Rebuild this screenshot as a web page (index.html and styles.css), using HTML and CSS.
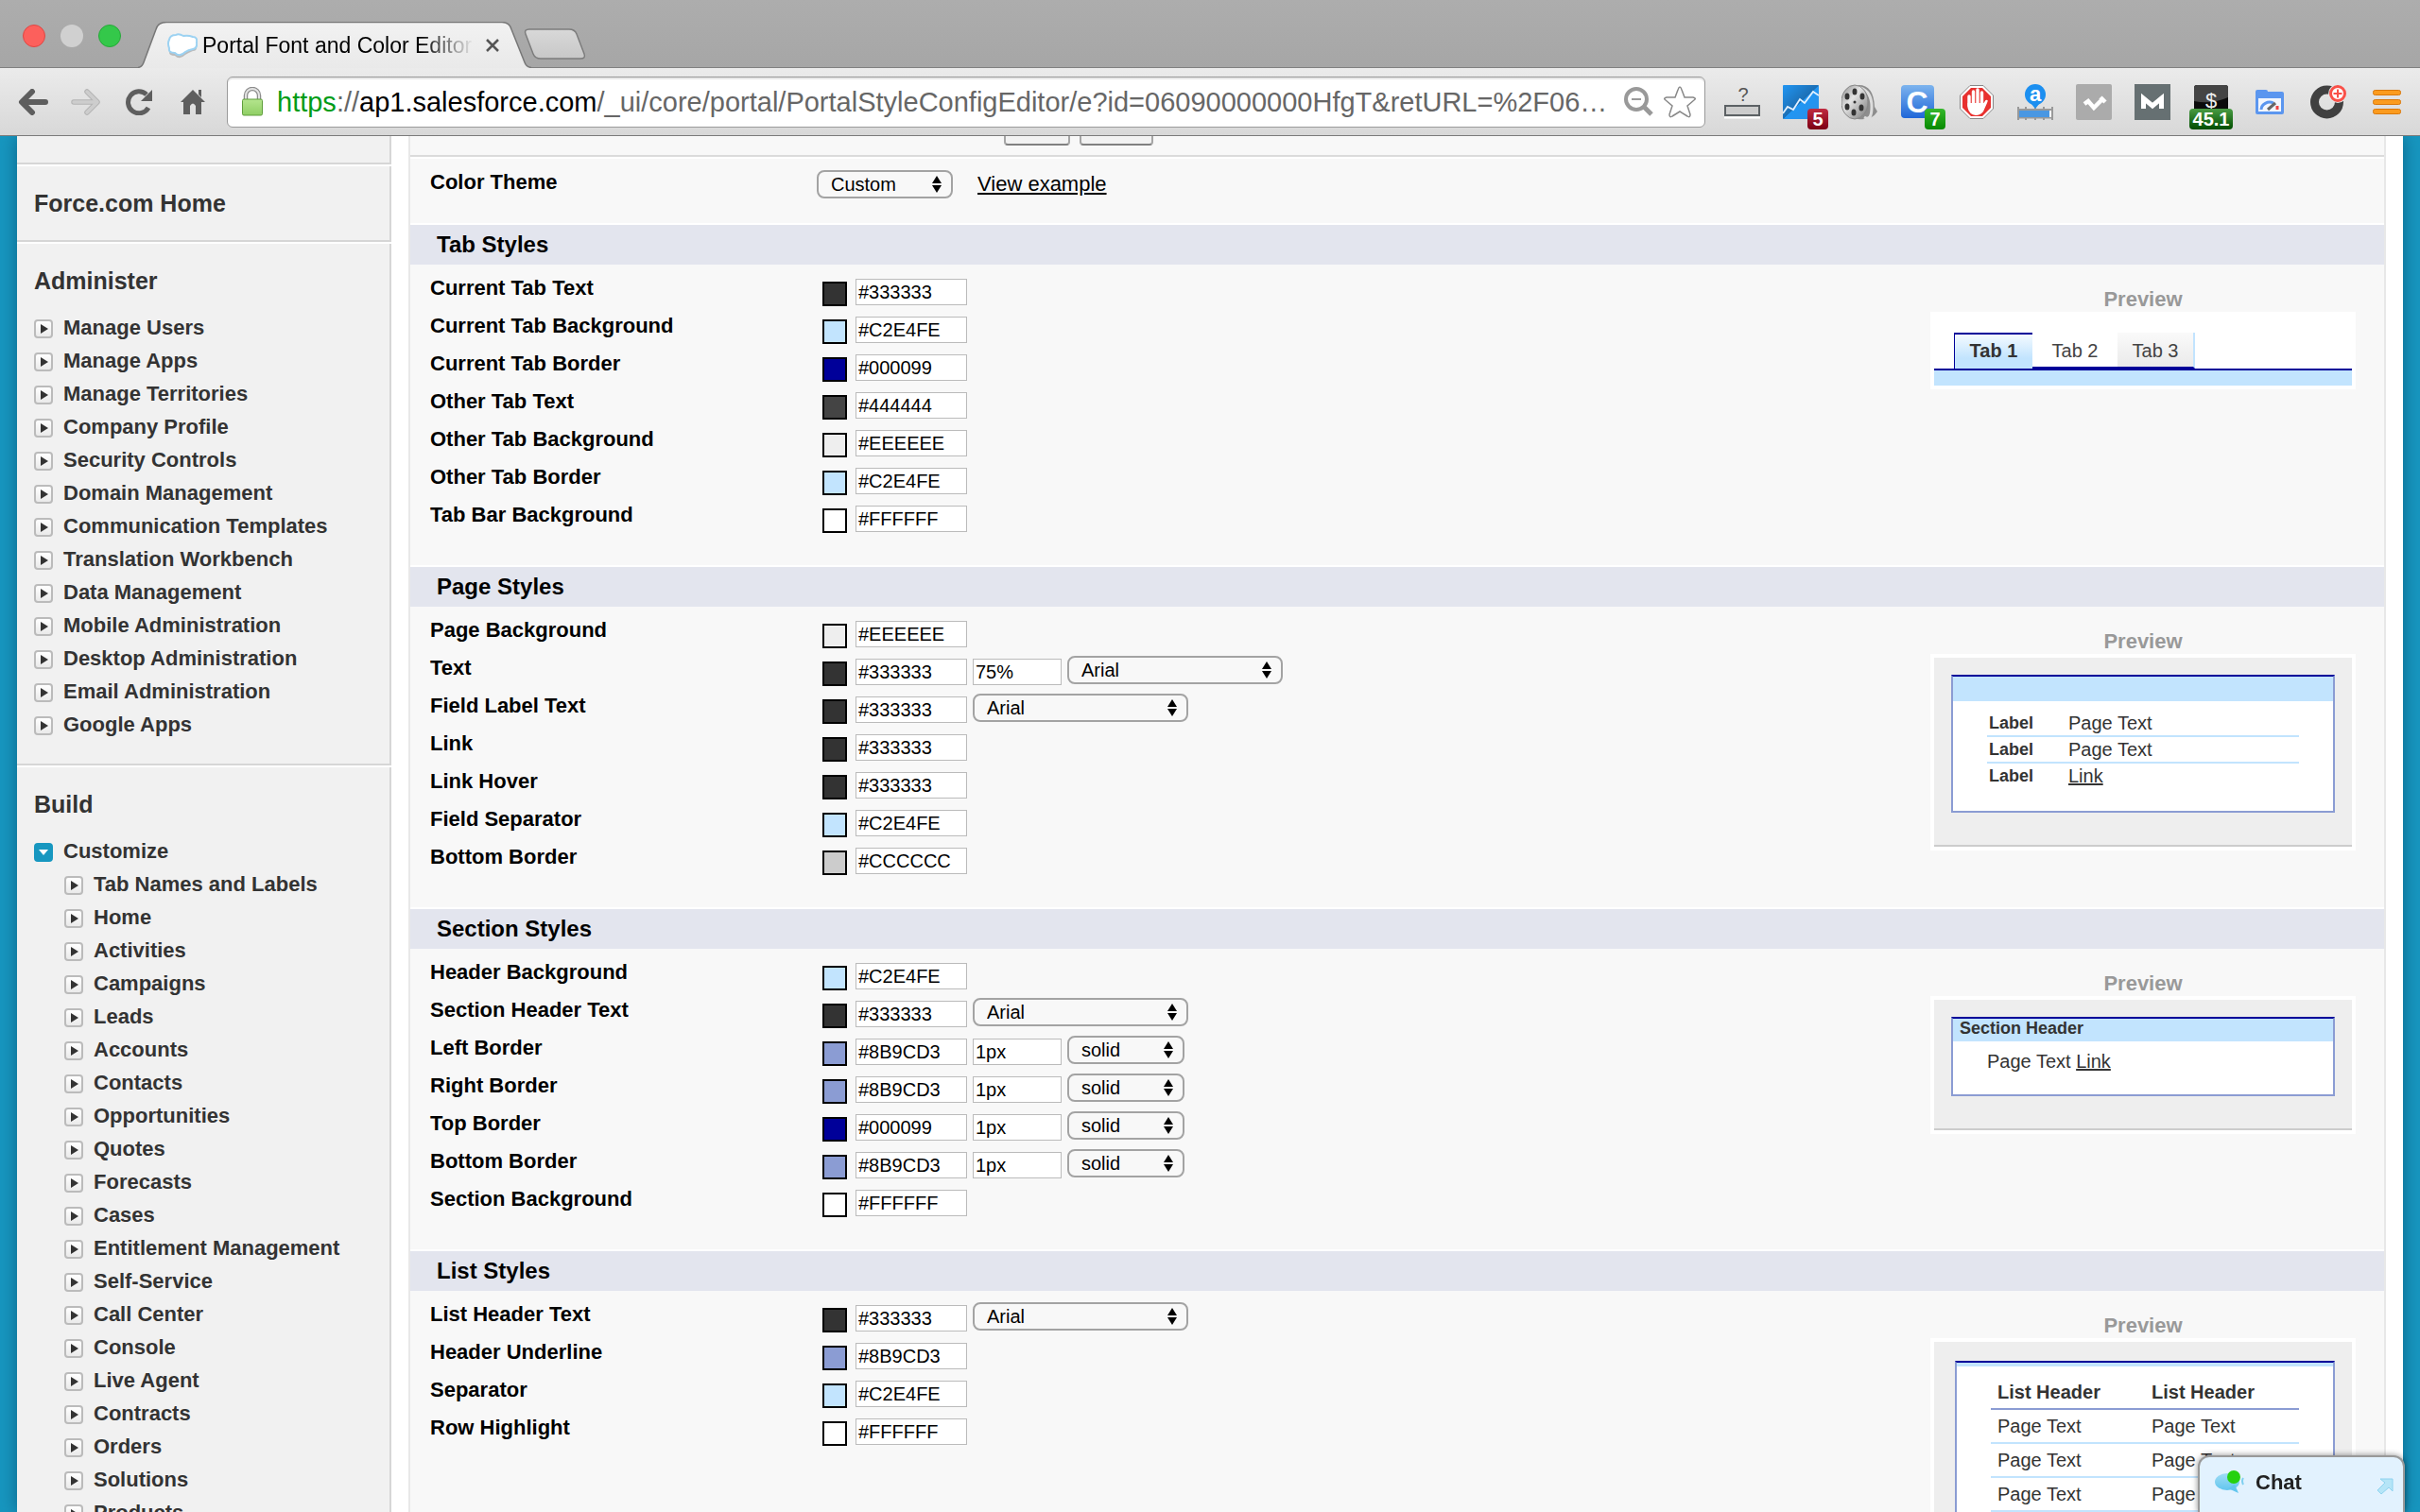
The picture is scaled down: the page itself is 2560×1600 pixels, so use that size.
FILE: index.html
```html
<!DOCTYPE html>
<html lang="en">
<head>
<meta charset="utf-8">
<title>Portal Font and Color Editor</title>
<link rel="stylesheet" href="styles.css">
</head>
<body>
<svg class="defs" aria-hidden="true">
  <symbol id="tri" viewBox="0 0 16 16"><path d="M5 3l8 5-8 5z" fill="#333"/></symbol>
  <linearGradient id="tabfill" x1="0" y1="0" x2="0" y2="1"><stop offset="0" stop-color="#f2f2f2"/><stop offset="1" stop-color="#e9e9e9"/></linearGradient>
  <linearGradient id="newfill" x1="0" y1="0" x2="0" y2="1"><stop offset="0" stop-color="#d8d8d8"/><stop offset="1" stop-color="#c8c8c8"/></linearGradient>
  <linearGradient id="lockfill" x1="0" y1="0" x2="0" y2="1"><stop offset="0" stop-color="#b5e58e"/><stop offset="1" stop-color="#8fce64"/></linearGradient>
  <linearGradient id="bluefill" x1="0" y1="0" x2="1" y2="1"><stop offset="0" stop-color="#2196f3"/><stop offset=".5" stop-color="#1c6fb5"/><stop offset=".51" stop-color="#2196f3"/><stop offset="1" stop-color="#2d8fe6"/></linearGradient>
  <linearGradient id="cfill" x1="0" y1="0" x2="0" y2="1"><stop offset="0" stop-color="#7db4ee"/><stop offset="1" stop-color="#1f66d8"/></linearGradient>
  <linearGradient id="reelfill" x1="0" y1="0" x2="1" y2="1"><stop offset="0" stop-color="#8a8a8a"/><stop offset=".4" stop-color="#e4e4e4"/><stop offset="1" stop-color="#777"/></linearGradient>
  <linearGradient id="bubble" x1="0" y1="0" x2="0" y2="1"><stop offset="0" stop-color="#9fdcf5"/><stop offset="1" stop-color="#62c6ee"/></linearGradient>
</svg>

<header class="browser">
  <div class="tabstrip">
    <div class="lights"><span class="light red"></span><span class="light grey"></span><span class="light green"></span></div>
    <div class="tab">
      <svg class="tab-shape" viewBox="0 0 416 49" preserveAspectRatio="none"><path d="M0 48.500C4 48 5 46 6 43L19 8Q21 .5 30 .5H385Q393 .5 395 8L409 43C410 46 412 48 416 48.500V50H0z" fill="url(#tabfill)"/><path d="M0 48.500C4 48 5 46 6 43L19 8Q21 .5 30 .5H385Q393 .5 395 8L409 43C410 46 412 48 416 48.500" fill="none" stroke="#777" stroke-width="1.500"/></svg>
      <svg class="favicon" viewBox="0 0 32 28"><path d="M2 8Q3 3 9 4Q12 1 17 4Q22 4 27 5Q32 5 31 12Q32 18 27 18Q22 20 19 22Q13 28 8 23Q1 23 2 17Q0 12 2 8z" fill="#9a9a9a" opacity=".6" transform="translate(0 2)"/><path d="M2 8Q3 3 9 3Q12 1 17 4Q22 3 27 5Q32 5 31 11Q32 17 27 18Q22 19 19 21Q13 27 8 22Q1 22 2 17Q0 12 2 8z" fill="#fff" stroke="#9cd2f2" stroke-width="2"/></svg>
      <span class="tab-title">Portal Font and Color Editor</span>
      <button class="tab-close" aria-label="Close tab"><svg viewBox="0 0 16 16"><path d="M2 2L14 14M14 2L2 14" stroke="#555" stroke-width="2.500"/></svg></button>
    </div>
    <button class="newtab" aria-label="New tab"><svg viewBox="0 0 66 34"><path d="M2 6Q0 1 6 1H48Q54 1 56 6L64 27Q66 32 60 32H18Q12 32 10 27z" fill="url(#newfill)" stroke="#7c7c7c" stroke-width="1.500"/></svg></button>
  </div>
  <div class="toolbar">
    <nav class="nav-buttons" aria-label="Browser">
      <button aria-label="Back"><svg viewBox="0 0 32 28"><path d="M15 3L4 14L15 25M5 14H29" fill="none" stroke="#5e5e5e" stroke-width="6" stroke-linecap="round" stroke-linejoin="round"/></svg></button>
      <button aria-label="Forward"><svg viewBox="0 0 32 28"><path d="M17 3L28 14L17 25M27 14H3" fill="none" stroke="#b4b4b4" stroke-width="5.500" stroke-linecap="round" stroke-linejoin="round"/><path d="M17 3L28 14L17 25M27 14H3" fill="none" stroke="#cdcdcd" stroke-width="3.500" stroke-linecap="round" stroke-linejoin="round"/></svg></button>
      <button aria-label="Reload"><svg viewBox="0 0 32 28"><path d="M26 20A11.500 11.500 0 1 1 24 6" fill="none" stroke="#5e5e5e" stroke-width="5"/><path d="M30 1V13H18z" fill="#5e5e5e"/></svg></button>
      <button aria-label="Home"><svg viewBox="0 0 32 28"><path d="M17 1L30 14H26V27H20V18Q17 13 14 18V27H7V14H4zM23 1H26V9L23 6z" fill="#5e5e5e"/></svg></button>
    </nav>
    <div class="omnibox">
      <svg class="lock" viewBox="0 0 24 32"><path d="M5 14V9a7 7 0 0 1 14 0V14" fill="none" stroke="#8c8c8c" stroke-width="4.500"/><path d="M5 14V9a7 7 0 0 1 14 0V14" fill="none" stroke="#e4e4e4" stroke-width="2"/><rect x="1.500" y="13" width="21" height="17" rx="1.500" fill="url(#lockfill)" stroke="#5f9e3c"/></svg>
      <div class="url" role="textbox" aria-label="Address"><span class="scheme">https</span>://<span class="host">ap1.salesforce.com</span>/_ui/core/portal/PortalStyleConfigEditor/e?id=06090000000HfgT&amp;retURL=%2F06…</div>
      <button class="omni-btn" aria-label="Zoom"><svg viewBox="0 0 32 34"><circle cx="14" cy="14" r="11" fill="none" stroke="#999" stroke-width="4"/><path d="M9 14H19" stroke="#999" stroke-width="2"/><path d="M22 22L30 30" stroke="#999" stroke-width="5"/></svg></button>
      <button class="omni-btn star" aria-label="Bookmark"><svg viewBox="0 0 36 36"><path d="M18 2Q19 2 20 5L23 13H32Q36 14 33 16L26 22L29 31Q29 35 26 33L18 28L10 33Q7 35 7 31L10 22L3 16Q0 14 4 13H13L16 5Q17 2 18 2z" fill="#fff" stroke="#888" stroke-width="1.500"/></svg></button>
    </div>
    <div class="extensions">
      <button aria-label="Box"><svg viewBox="0 0 38 38"><text x="20" y="18" font-size="20" text-anchor="middle" fill="#555">?</text><rect x="1" y="23" width="36" height="10" fill="#ccc" stroke="#5c6164" stroke-width="2"/><path d="M0 35.500H38" stroke="#fff" stroke-width="2"/></svg></button>
      <button aria-label="Stats"><svg viewBox="0 0 38 38"><rect y="1" width="38" height="36" rx="1" fill="url(#bluefill)"/><path d="M0 31L5 24L11 27L18 16L23 20L32 8L38 12" fill="none" stroke="#e3f1ff" stroke-width="1.800"/></svg><span class="badge crimson">5</span></button>
      <button aria-label="Film"><svg viewBox="0 0 38 38"><path d="M17 1Q34 0 35 24L38 29Q32 39 17 37z" fill="#8d8d8d"/><path d="M20 4Q32 8 32 24T24 35" fill="none" stroke="#ddd" stroke-width="3"/><ellipse cx="14" cy="19" rx="14" ry="18" fill="url(#reelfill)" stroke="#888"/><g fill="#333"><ellipse cx="14" cy="8" rx="2.500" ry="3.500"/><ellipse cx="22" cy="13" rx="2.500" ry="3.500"/><ellipse cx="21" cy="25" rx="2.500" ry="3.500"/><ellipse cx="13" cy="30" rx="2.500" ry="3.500"/><ellipse cx="6" cy="24" rx="2.500" ry="3.500"/><ellipse cx="6" cy="13" rx="2.500" ry="3.500"/><circle cx="14" cy="19" r="1.500"/></g></svg></button>
      <button aria-label="Clip"><svg viewBox="0 0 38 38"><rect x="1" y="1" width="35" height="35" rx="4" fill="url(#cfill)"/><text x="18" y="30" font-size="32" font-weight="700" text-anchor="middle" fill="#fff">C</text></svg><span class="badge lime">7</span></button>
      <button aria-label="Block"><svg viewBox="0 0 38 38"><path d="M12 1.500H26L36.500 12V26L26 36.500H12L1.500 26V12z" fill="#fff" stroke="#888"/><path d="M13 4H25L34 13V25L25 34H13L4 25V13z" fill="#e8312f"/><path d="M11 13V23M15.500 8V20M20 6V20M24.500 9V21" stroke="#fff" stroke-width="3.400" stroke-linecap="round"/><path d="M9.500 20H26.500L28.500 17Q32 16 30 20L26 29Q23 33 18 33Q11 32 9.500 25z" fill="#fff"/></svg></button>
      <button aria-label="Measure"><svg viewBox="0 0 38 38"><path d="M0 27H38M0 35.500H38M1 24V38M37 24V38M9 24V28M19 24V28M28 24V28M9 34V38M19 34V38M28 34V38" stroke="#999" stroke-width="2"/><rect x="2" y="28" width="32" height="7" fill="#4a97e2"/><rect x="34" y="28" width="2" height="7" fill="#fff"/><path d="M19 26L14 20H24z" fill="#1c8ff0"/><circle cx="19" cy="11" r="11" fill="#1c8ff0"/><text x="19" y="18" font-size="22" font-weight="700" text-anchor="middle" fill="#fff">a</text></svg></button>
      <button aria-label="Monitor"><svg viewBox="0 0 38 38"><rect width="38" height="38" rx="2" fill="#ababab"/><path d="M9 21L13 18L19 25L28 16M26 14L31 19" fill="none" stroke="#fff" stroke-width="4.500"/></svg></button>
      <button aria-label="Mail"><svg viewBox="0 0 38 38"><rect width="38" height="38" fill="#667072"/><path d="M9.500 26V15L19 23L28.500 15V26" fill="none" stroke="#fff" stroke-width="5"/></svg></button>
      <button aria-label="Price"><svg viewBox="0 0 38 38"><rect x="1" y="1" width="36" height="36" rx="3" fill="#0b0b0b"/><path d="M1 18V4Q1 1 4 1H34Q37 1 37 4V14Q19 22 1 18z" fill="#444"/><text x="19" y="25" font-size="22" text-anchor="middle" fill="#eee">$</text></svg><span class="badge forest wide">45.1</span></button>
      <button aria-label="Speed"><svg viewBox="0 0 38 38"><rect x="4" y="6" width="13" height="8" rx="2" fill="#5b96ef"/><path d="M4 8H32Q34 8 34 10V30Q34 32 32 32H6Q4 32 4 30z" fill="#5b96ef"/><rect x="7" y="15" width="24" height="14" fill="#f2f6fd"/><path d="M10 27A9 8 0 0 1 23 20" fill="none" stroke="#5b96ef" stroke-width="3"/><path d="M17 27L25 20" stroke="#666" stroke-width="3"/><path d="M27 23V27" stroke="#e44" stroke-width="3"/></svg></button>
      <button aria-label="Ring"><svg viewBox="0 0 38 38"><circle cx="17.500" cy="19" r="13" fill="none" stroke="#404040" stroke-width="9"/><circle cx="29" cy="10" r="10" fill="#e6e6e6"/><circle cx="29" cy="10" r="7.500" fill="#fff" stroke="#fa5048" stroke-width="3"/><path d="M24.500 10H33.500M29 5.500V14.500" stroke="#fa5048" stroke-width="2"/></svg></button>
      <button aria-label="Menu"><svg viewBox="0 0 38 38"><g fill="#fb9b1e" stroke="#d9780c"><rect x="4.500" y="6.500" width="29" height="5" rx="2"/><rect x="4.500" y="16.500" width="29" height="5" rx="2"/><rect x="4.500" y="26.500" width="29" height="5" rx="2"/></g></svg></button>
    </div>
  </div>
</header>

<div class="page">
  <aside class="sidebar">
    <div class="panel stub"></div>
    <div class="panel home"><h2>Force.com Home</h2></div>
    <nav class="panel" aria-label="Administer">
      <h2>Administer</h2>
      <ul>
        <li><button class="tog" aria-label="Expand"><svg><use href="#tri"/></svg></button><a href="#">Manage Users</a></li>
        <li><button class="tog" aria-label="Expand"><svg><use href="#tri"/></svg></button><a href="#">Manage Apps</a></li>
        <li><button class="tog" aria-label="Expand"><svg><use href="#tri"/></svg></button><a href="#">Manage Territories</a></li>
        <li><button class="tog" aria-label="Expand"><svg><use href="#tri"/></svg></button><a href="#">Company Profile</a></li>
        <li><button class="tog" aria-label="Expand"><svg><use href="#tri"/></svg></button><a href="#">Security Controls</a></li>
        <li><button class="tog" aria-label="Expand"><svg><use href="#tri"/></svg></button><a href="#">Domain Management</a></li>
        <li><button class="tog" aria-label="Expand"><svg><use href="#tri"/></svg></button><a href="#">Communication Templates</a></li>
        <li><button class="tog" aria-label="Expand"><svg><use href="#tri"/></svg></button><a href="#">Translation Workbench</a></li>
        <li><button class="tog" aria-label="Expand"><svg><use href="#tri"/></svg></button><a href="#">Data Management</a></li>
        <li><button class="tog" aria-label="Expand"><svg><use href="#tri"/></svg></button><a href="#">Mobile Administration</a></li>
        <li><button class="tog" aria-label="Expand"><svg><use href="#tri"/></svg></button><a href="#">Desktop Administration</a></li>
        <li><button class="tog" aria-label="Expand"><svg><use href="#tri"/></svg></button><a href="#">Email Administration</a></li>
        <li><button class="tog" aria-label="Expand"><svg><use href="#tri"/></svg></button><a href="#">Google Apps</a></li>
      </ul>
    </nav>
    <nav class="panel" aria-label="Build">
      <h2>Build</h2>
      <ul>
        <li><button class="tog open" aria-label="Collapse"><svg viewBox="0 0 16 16"><path d="M3 5H13L8 11z" fill="#fff"/></svg></button><a href="#">Customize</a></li>
      </ul>
      <ul class="sub">
        <li><button class="tog" aria-label="Expand"><svg><use href="#tri"/></svg></button><a href="#">Tab Names and Labels</a></li>
        <li><button class="tog" aria-label="Expand"><svg><use href="#tri"/></svg></button><a href="#">Home</a></li>
        <li><button class="tog" aria-label="Expand"><svg><use href="#tri"/></svg></button><a href="#">Activities</a></li>
        <li><button class="tog" aria-label="Expand"><svg><use href="#tri"/></svg></button><a href="#">Campaigns</a></li>
        <li><button class="tog" aria-label="Expand"><svg><use href="#tri"/></svg></button><a href="#">Leads</a></li>
        <li><button class="tog" aria-label="Expand"><svg><use href="#tri"/></svg></button><a href="#">Accounts</a></li>
        <li><button class="tog" aria-label="Expand"><svg><use href="#tri"/></svg></button><a href="#">Contacts</a></li>
        <li><button class="tog" aria-label="Expand"><svg><use href="#tri"/></svg></button><a href="#">Opportunities</a></li>
        <li><button class="tog" aria-label="Expand"><svg><use href="#tri"/></svg></button><a href="#">Quotes</a></li>
        <li><button class="tog" aria-label="Expand"><svg><use href="#tri"/></svg></button><a href="#">Forecasts</a></li>
        <li><button class="tog" aria-label="Expand"><svg><use href="#tri"/></svg></button><a href="#">Cases</a></li>
        <li><button class="tog" aria-label="Expand"><svg><use href="#tri"/></svg></button><a href="#">Entitlement Management</a></li>
        <li><button class="tog" aria-label="Expand"><svg><use href="#tri"/></svg></button><a href="#">Self-Service</a></li>
        <li><button class="tog" aria-label="Expand"><svg><use href="#tri"/></svg></button><a href="#">Call Center</a></li>
        <li><button class="tog" aria-label="Expand"><svg><use href="#tri"/></svg></button><a href="#">Console</a></li>
        <li><button class="tog" aria-label="Expand"><svg><use href="#tri"/></svg></button><a href="#">Live Agent</a></li>
        <li><button class="tog" aria-label="Expand"><svg><use href="#tri"/></svg></button><a href="#">Contracts</a></li>
        <li><button class="tog" aria-label="Expand"><svg><use href="#tri"/></svg></button><a href="#">Orders</a></li>
        <li><button class="tog" aria-label="Expand"><svg><use href="#tri"/></svg></button><a href="#">Solutions</a></li>
        <li><button class="tog" aria-label="Expand"><svg><use href="#tri"/></svg></button><a href="#">Products</a></li>
      </ul>
    </nav>
  </aside>

  <main class="editor">
    <div class="actions"><button class="save" aria-label="Save"></button><button class="cancel" aria-label="Cancel"></button></div>
    <div class="theme">
      <label for="theme">Color Theme</label>
      <select id="theme" class="theme-select"><option>Custom</option></select>
      <a href="#">View example</a>
    </div>

    <section>
      <h3>Tab Styles</h3>
      <div class="section-body">
        <div class="rows">
          <div class="row"><label for="t1">Current Tab Text</label><span class="swatch c333"></span><input id="t1" value="#333333"></div>
          <div class="row"><label for="t2">Current Tab Background</label><span class="swatch sky"></span><input id="t2" value="#C2E4FE"></div>
          <div class="row"><label for="t3">Current Tab Border</label><span class="swatch navy"></span><input id="t3" value="#000099"></div>
          <div class="row"><label for="t4">Other Tab Text</label><span class="swatch c444"></span><input id="t4" value="#444444"></div>
          <div class="row"><label for="t5">Other Tab Background</label><span class="swatch ceee"></span><input id="t5" value="#EEEEEE"></div>
          <div class="row"><label for="t6">Other Tab Border</label><span class="swatch sky"></span><input id="t6" value="#C2E4FE"></div>
          <div class="row"><label for="t7">Tab Bar Background</label><span class="swatch white"></span><input id="t7" value="#FFFFFF"></div>
        </div>
        <div class="preview">
          <h4>Preview</h4>
          <div class="frame tabs-frame">
            <div class="ptabs"><span class="ptab current">Tab 1</span><span class="ptab">Tab 2</span><span class="ptab shaded">Tab 3</span></div>
            <div class="pbar"></div>
          </div>
        </div>
      </div>
    </section>

    <section>
      <h3>Page Styles</h3>
      <div class="section-body">
        <div class="rows">
          <div class="row"><label for="p1">Page Background</label><span class="swatch ceee"></span><input id="p1" value="#EEEEEE"></div>
          <div class="row"><label for="p2">Text</label><span class="swatch c333"></span><input id="p2" value="#333333"><input class="size" aria-label="Text size" value="75%"><select class="font" aria-label="Text font"><option>Arial</option></select></div>
          <div class="row"><label for="p3">Field Label Text</label><span class="swatch c333"></span><input id="p3" value="#333333"><select class="font" aria-label="Field label font"><option>Arial</option></select></div>
          <div class="row"><label for="p4">Link</label><span class="swatch c333"></span><input id="p4" value="#333333"></div>
          <div class="row"><label for="p5">Link Hover</label><span class="swatch c333"></span><input id="p5" value="#333333"></div>
          <div class="row"><label for="p6">Field Separator</label><span class="swatch sky"></span><input id="p6" value="#C2E4FE"></div>
          <div class="row"><label for="p7">Bottom Border</label><span class="swatch cccc"></span><input id="p7" value="#CCCCCC"></div>
        </div>
        <div class="preview">
          <h4>Preview</h4>
          <div class="frame">
            <div class="canvas">
              <div class="card page-card">
                <div class="card-head"></div>
                <dl class="fields">
                  <div><dt>Label</dt><dd>Page Text</dd></div>
                  <div><dt>Label</dt><dd>Page Text</dd></div>
                  <div><dt>Label</dt><dd><a href="#">Link</a></dd></div>
                </dl>
              </div>
            </div>
          </div>
        </div>
      </div>
    </section>

    <section>
      <h3>Section Styles</h3>
      <div class="section-body">
        <div class="rows">
          <div class="row"><label for="s1">Header Background</label><span class="swatch sky"></span><input id="s1" value="#C2E4FE"></div>
          <div class="row"><label for="s2">Section Header Text</label><span class="swatch c333"></span><input id="s2" value="#333333"><select class="font" aria-label="Section header font"><option>Arial</option></select></div>
          <div class="row"><label for="s3">Left Border</label><span class="swatch peri"></span><input id="s3" value="#8B9CD3"><input class="size" aria-label="Left border width" value="1px"><select class="line" aria-label="Left border style"><option>solid</option></select></div>
          <div class="row"><label for="s4">Right Border</label><span class="swatch peri"></span><input id="s4" value="#8B9CD3"><input class="size" aria-label="Right border width" value="1px"><select class="line" aria-label="Right border style"><option>solid</option></select></div>
          <div class="row"><label for="s5">Top Border</label><span class="swatch navy"></span><input id="s5" value="#000099"><input class="size" aria-label="Top border width" value="1px"><select class="line" aria-label="Top border style"><option>solid</option></select></div>
          <div class="row"><label for="s6">Bottom Border</label><span class="swatch peri"></span><input id="s6" value="#8B9CD3"><input class="size" aria-label="Bottom border width" value="1px"><select class="line" aria-label="Bottom border style"><option>solid</option></select></div>
          <div class="row"><label for="s7">Section Background</label><span class="swatch white"></span><input id="s7" value="#FFFFFF"></div>
        </div>
        <div class="preview">
          <h4>Preview</h4>
          <div class="frame">
            <div class="canvas">
              <div class="card section-card">
                <div class="card-head">Section Header</div>
                <p>Page Text <a href="#">Link</a></p>
              </div>
            </div>
          </div>
        </div>
      </div>
    </section>

    <section>
      <h3>List Styles</h3>
      <div class="section-body">
        <div class="rows">
          <div class="row"><label for="l1">List Header Text</label><span class="swatch c333"></span><input id="l1" value="#333333"><select class="font" aria-label="List header font"><option>Arial</option></select></div>
          <div class="row"><label for="l2">Header Underline</label><span class="swatch peri"></span><input id="l2" value="#8B9CD3"></div>
          <div class="row"><label for="l3">Separator</label><span class="swatch sky"></span><input id="l3" value="#C2E4FE"></div>
          <div class="row"><label for="l4">Row Highlight</label><span class="swatch white"></span><input id="l4" value="#FFFFFF"></div>
        </div>
        <div class="preview">
          <h4>Preview</h4>
          <div class="frame">
            <div class="canvas">
              <div class="card list-card">
                <div class="card-head"></div>
                <table>
                  <thead><tr><th>List Header</th><th>List Header</th></tr></thead>
                  <tbody>
                    <tr><td>Page Text</td><td>Page Text</td></tr>
                    <tr><td>Page Text</td><td>Page Text</td></tr>
                    <tr><td>Page Text</td><td>Page Text</td></tr>
                  </tbody>
                </table>
              </div>
            </div>
          </div>
        </div>
      </div>
    </section>
  </main>
</div>

<button class="chat">
  <svg class="chat-icon" viewBox="0 0 32 28"><ellipse cx="13" cy="13" rx="13" ry="9" fill="url(#bubble)"/><path d="M14 20L25 25L21 16z" fill="#62c6ee"/><path d="M30 9Q28 12 30 16" stroke="#7fd0f0" stroke-width="2" fill="none"/><circle cx="20" cy="8" r="7" fill="#25d10f"/></svg>
  <span>Chat</span>
  <svg class="popout" viewBox="0 0 18 18"><path d="M4 1H17V14L13 10L5 17L1 13L9 5z" fill="#b5e5f7" stroke="#8fd3ef"/></svg>
</button>
</body>
</html>
```
FILE: styles.css
```css
* { box-sizing: border-box; }

body {
  margin: 0;
  height: 100vh;
  display: flex;
  flex-direction: column;
  overflow: hidden;
  background: #1797c0;
  color: #000;
  font-family: "Liberation Sans", Arial, Helvetica, sans-serif;
  font-size: 22px;
}

h2, h3, h4, p, ul, dl, dd { margin: 0; padding: 0; }
ul { list-style: none; }
svg { display: block; }
.defs { position: absolute; width: 0; height: 0; }
button, input, select { font-family: inherit; color: inherit; margin: 0; }
button { position: relative; padding: 0; border: 0; background: none; }

/* Browser window */
.browser { flex: none; }

.tabstrip {
  display: flex;
  align-items: flex-end;
  height: 72px;
  padding-left: 24px;
  background: linear-gradient(#adadad, #a6a6a6);
  box-shadow: inset 0 -1px #808080;
}

.lights { display: flex; align-items: center; align-self: flex-start; gap: 16px; width: 122px; padding-top: 26px; }
.light { width: 24px; height: 24px; border-radius: 50%; }
.light.red { background: #fc605c; border: 1px solid #de4643; }
.light.grey { background: #d0d0d0; }
.light.green { background: #34c84a; border: 1px solid #27a839; }

.tab { position: relative; display: flex; align-items: center; width: 416px; height: 49px; padding: 0 31px; }
.tab-shape { position: absolute; inset: 0; width: 100%; height: 100%; }
.favicon { position: relative; width: 32px; height: 28px; }
.tab-title {
  position: relative;
  flex: 1;
  margin-left: 5px;
  overflow: hidden;
  white-space: nowrap;
  font-size: 23px;
  line-height: 32px;
  mask-image: linear-gradient(to right, #000 230px, transparent 288px);
}
.tab-close { width: 16px; height: 16px; margin-right: 2px; }
.newtab { width: 66px; height: 34px; margin: 0 0 8px -8px; }

.toolbar {
  display: flex;
  align-items: center;
  height: 72px;
  padding: 0 16px 0 19px;
  background: linear-gradient(#ebebeb, #d8d8d8);
  border-bottom: 1px solid #7b7b7b;
}

.nav-buttons { display: flex; gap: 24px; width: 221px; }
.nav-buttons svg { width: 32px; height: 28px; }

.omnibox {
  flex: 1;
  display: flex;
  align-items: center;
  height: 54px;
  min-width: 0;
  padding: 0 8px 0 14px;
  background: #fff;
  border: 1px solid #9a9a9a;
  border-radius: 6px;
  box-shadow: inset 0 2px 1px #e6e6e6;
}
.lock { width: 24px; height: 32px; }
.url { flex: 1; margin-left: 14px; overflow: hidden; white-space: nowrap; font-size: 29px; line-height: 40px; color: #666; }
.scheme { color: #009c16; }
.host { color: #000; }
.omni-btn svg { width: 32px; height: 34px; }
.omni-btn.star { margin-left: 10px; }
.omni-btn.star svg { width: 36px; height: 36px; }

.extensions { display: flex; gap: 24px; margin-left: 20px; }
.extensions svg { width: 38px; height: 38px; }
.badge {
  position: absolute;
  top: 26px;
  left: 26px;
  width: 22px;
  border-radius: 4px;
  color: #fff;
  font-size: 20px;
  font-weight: 700;
  line-height: 22px;
  text-align: center;
}
.badge.wide { left: -4px; width: 46px; }
.crimson { background: linear-gradient(#c02b40, #7c0014); }
.lime { background: linear-gradient(#35b82c, #078900); }
.forest { background: linear-gradient(#4a9c44, #004d00); }

/* Page */
.page {
  flex: 1;
  display: flex;
  align-items: flex-start;
  gap: 18px;
  min-height: 0;
  margin: 0 18px;
  padding-right: 18px;
  background: #fff;
  box-shadow: 0 0 18px rgba(0, 50, 80, .5);
  clip-path: inset(0 -18px);
}

.sidebar { flex: none; width: 396px; color: #333; }
.panel {
  margin-bottom: 2px;
  padding: 25px 18px 24px;
  background: #f1f1f1;
  border-right: 2px solid #d6d6d6;
  border-bottom: 2px solid #d6d6d6;
}
.panel.stub { height: 30px; padding: 0; }
.panel.home { height: 80px; }
.panel h2 { margin-bottom: 18px; font-size: 25px; line-height: 28px; }
.panel li { display: flex; align-items: center; height: 35px; gap: 11px; }
.panel .sub { padding-left: 32px; }
.panel a { color: #333; font-weight: 700; text-decoration: none; }

.tog {
  width: 20px;
  height: 20px;
  margin-top: 2px;
  border: 2px solid #bbb;
  border-radius: 4px;
  background: linear-gradient(#fff, #eaeaea);
}
.tog svg { width: 16px; height: 16px; }
.tog.open { border-color: #1797c0; background: #1797c0; }

.editor {
  flex: 1;
  min-width: 0;
  background: #f8f8f8;
  border: solid #e8e8e8;
  border-width: 0 2px;
}

.actions { display: flex; gap: 10px; height: 22px; padding-left: 628px; border-bottom: 2px solid #dbdbdb; }
.actions button { height: 10px; border: 2px solid #a5a5a5; border-top: 0; border-bottom-color: #808080; border-radius: 0 0 4px 4px; background: #f2f2f2; }
.save { width: 70px; }
.cancel { width: 78px; }

.theme { display: flex; align-items: flex-start; height: 70px; padding: 12px 21px; border-top: 2px solid #fff; }
.theme label { width: 409px; line-height: 26px; font-weight: 700; }
.theme a { margin-left: 26px; color: #000; line-height: 30px; }

section h3 { height: 44px; padding-left: 28px; border-top: 2px solid #fff; background: #e3e5ee; font-size: 24px; line-height: 42px; }
.section-body { display: flex; justify-content: space-between; height: 318px; padding: 8px 30px 30px 21px; }

.row { display: flex; align-items: flex-start; gap: 6px; height: 40px; padding-top: 4px; }
.row label { width: 409px; line-height: 26px; font-weight: 700; }
.swatch { width: 26px; height: 26px; margin: 6px 3px 0 0; border: 2px solid #000; }
.c333 { background: #333; }
.c444 { background: #444; }
.ceee { background: #eee; }
.cccc { background: #ccc; }
.sky { background: #c2e4fe; }
.navy { background: #009; }
.peri { background: #8b9cd3; }
.white { background: #fff; }

input { width: 118px; height: 28px; padding: 0 2px; border: 1px solid #bbb; background: #fff; font-size: 20px; }
.row input { margin-top: 3px; }
input.size { width: 94px; }

select {
  appearance: none;
  height: 30px;
  padding: 0 13px;
  border: 2px solid #a3a3a3;
  border-radius: 8px;
  background: #f8f8f8 url("data:image/svg+xml,%3Csvg xmlns='http://www.w3.org/2000/svg' width='10' height='18'%3E%3Cpath d='M5 0L10 8H0zM5 18L0 10H10z'/%3E%3C/svg%3E") no-repeat right 10px center;
  font-size: 20px;
}
select.font { width: 228px; }
select.line { width: 124px; }
.theme-select { width: 144px; }

/* Previews */
.preview { width: 450px; color: #333; font-size: 20px; }
.preview a { color: #333; }
.preview h4 { padding-top: 15px; color: #999; font-size: 22px; line-height: 27px; text-align: center; }
.frame { border: 4px solid #fff; background: #fff; }
.canvas { padding: 18px; background: #eee; border-bottom: 2px solid #ccc; }

.ptabs { display: flex; height: 56px; padding: 18px 0 0 21px; }
.ptab { width: 90px; border-bottom: 2px solid #009; line-height: 38px; text-align: center; color: #444; }
.ptab.current { width: 83px; border: solid #009; border-width: 2px 0 0 1px; background: linear-gradient(#f4faff, #c2e4fe 70%); color: #333; font-weight: 700; line-height: 34px; }
.ptab.shaded { width: 82px; border-right: 2px solid #c2e4fe; background: linear-gradient(#fafafa, #eaeaea); }
.pbar { height: 18px; border-top: 2px solid #009; background: #c2e4fe; }

.card { border: 2px solid #8b9cd3; border-top-color: #009; background: #fff; }
.card-head { background: #c2e4fe; font-weight: 700; }

.page-card { height: 146px; margin-bottom: 16px; }
.page-card .card-head { height: 26px; margin-bottom: 10px; }
.fields { padding: 0 36px; }
.fields div { display: flex; height: 28px; padding-left: 2px; border-bottom: 2px solid #c2e4fe; line-height: 26px; }
.fields div:last-child { border-bottom: 0; }
.fields dt { width: 84px; font-size: 18px; font-weight: 700; }

.section-card { height: 84px; margin-bottom: 16px; }
.section-card .card-head { height: 24px; padding-left: 7px; font-size: 18px; line-height: 20px; }
.section-card p { padding: 8px 36px; line-height: 26px; }

.list-card { height: 206px; margin: 2px 0 16px 4px; }
.list-card .card-head { height: 4px; margin-bottom: 8px; }
table { width: 326px; margin: 0 36px; border-collapse: separate; border-spacing: 0; }
th, td { height: 36px; padding: 0 0 0 7px; border-bottom: 2px solid #c2e4fe; text-align: left; }
th { height: 38px; padding-top: 2px; border-bottom-color: #8b9cd3; }
th:first-child, td:first-child { width: 50%; }

/* Docked chat */
.chat {
  position: fixed;
  right: 16px;
  bottom: 0;
  display: flex;
  align-items: center;
  width: 219px;
  height: 60px;
  padding: 0 10px 4px 16px;
  border: 2px solid #999;
  border-bottom: 0;
  border-radius: 12px 12px 0 0;
  background: #e2f2fe;
  box-shadow: 0 0 6px rgba(0, 0, 0, .45);
  color: #222;
  font-size: 22px;
  font-weight: 700;
}
.chat span { flex: 1; margin-left: 11px; text-align: left; }
.chat-icon { width: 32px; height: 28px; }
.popout { width: 18px; height: 18px; margin-top: 8px; }
```
